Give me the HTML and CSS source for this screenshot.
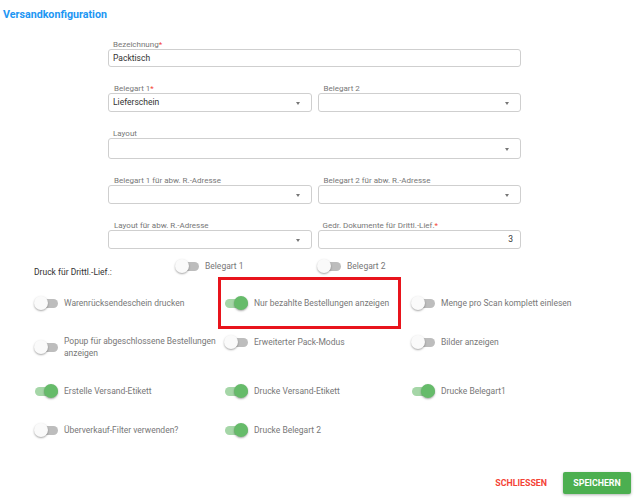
FILE: index.html
```html
<!DOCTYPE html>
<html lang="de">
<head>
    <meta charset="UTF-8">
    <meta name="viewport" content="width=device-width, initial-scale=1.0">
    <title>Versandkonfiguration</title>
    <link rel="stylesheet" href="styles.css">
</head>
<body>
    <h1 class="title">Versandkonfiguration</h1>

    <div class="form">
        <div class="field wide">
            <label class="notch">Bezeichnung<span class="req">*</span></label>
            <div class="box short">Packtisch</div>
        </div>

        <div class="field">
            <label>Belegart 1<span class="req">*</span></label>
            <div class="box">Lieferschein<span class="arrow"></span></div>
        </div>
        <div class="field">
            <label>Belegart 2</label>
            <div class="box"><span class="arrow"></span></div>
        </div>

        <div class="field wide">
            <label class="notch">Layout</label>
            <div class="box tall"><span class="arrow"></span></div>
        </div>

        <div class="field">
            <label>Belegart 1 für abw. R.-Adresse</label>
            <div class="box"><span class="arrow"></span></div>
        </div>
        <div class="field">
            <label>Belegart 2 für abw. R.-Adresse</label>
            <div class="box"><span class="arrow"></span></div>
        </div>

        <div class="field">
            <label>Layout für abw. R.-Adresse</label>
            <div class="box"><span class="arrow"></span></div>
        </div>
        <div class="field">
            <label class="notch">Gedr. Dokumente für Drittl.-Lief.<span class="req">*</span></label>
            <div class="box number">3</div>
        </div>
    </div>

    <div class="options">
        <div class="druck">
            <div class="druck-label">Druck für Drittl.-Lief.:</div>
            <div class="opt druck-item"><span class="toggle"></span><span>Belegart 1</span></div>
            <div class="opt"><span class="toggle"></span><span>Belegart 2</span></div>
        </div>

        <div class="grid">
            <div class="opt"><span class="toggle"></span><span>Warenrücksendeschein drucken</span></div>
            <div class="opt marked"><span class="toggle on"></span><span>Nur bezahlte Bestellungen anzeigen</span></div>
            <div class="opt"><span class="toggle"></span><span>Menge pro Scan komplett einlesen</span></div>

            <div class="opt"><span class="toggle"></span><span>Popup für abgeschlossene Bestellungen anzeigen</span></div>
            <div class="opt"><span class="toggle"></span><span>Erweiterter Pack-Modus</span></div>
            <div class="opt"><span class="toggle"></span><span>Bilder anzeigen</span></div>

            <div class="opt"><span class="toggle on"></span><span>Erstelle Versand-Etikett</span></div>
            <div class="opt"><span class="toggle on"></span><span>Drucke Versand-Etikett</span></div>
            <div class="opt"><span class="toggle on"></span><span>Drucke Belegart1</span></div>

            <div class="opt"><span class="toggle"></span><span>Überverkauf-Filter verwenden?</span></div>
            <div class="opt"><span class="toggle on"></span><span>Drucke Belegart 2</span></div>
        </div>
    </div>

    <div class="footer">
        <button class="btn close">SCHLIESSEN</button>
        <button class="btn save">SPEICHERN</button>
    </div>
</body>
</html>
```

FILE: styles.css
```css
* {
    padding: 0;
    margin: 0;
    box-sizing: border-box;
}

body {
    font-family: Roboto, "Liberation Sans", sans-serif;
    color: #333;
    background: #fff;
    width: 635px;
    height: 500px;
    overflow: hidden;
}

.title {
    font-size: 10.7px;
    font-weight: 700;
    color: #2196f3;
    line-height: 14px;
    padding: 8px 0 0 3px;
}

/* form fields */
.form {
    width: 413px;
    margin: 18px 0 0 108px;
    display: grid;
    grid-template-columns: 1fr 1fr;
    column-gap: 6px;
    row-gap: 17px;
}

.field.wide {
    grid-column: span 2;
}

.field label {
    display: block;
    font-size: 8px;
    line-height: 9px;
    height: 9px;
    color: #777;
    padding-left: 6px;
    white-space: nowrap;
}

.field label.notch {
    display: table;
    position: relative;
    background: #fff;
    margin-left: 4px;
    padding: 0 2px 0 1px;
    height: 11px;
    margin-bottom: -2px;
}

.req {
    color: #f44336;
}

.box {
    position: relative;
    height: 19px;
    border: 1px solid #cfcfcf;
    border-radius: 3px;
    font-size: 8.5px;
    line-height: 17px;
    color: #333;
    padding: 0 4px;
}

.box.short {
    height: 18px;
    line-height: 16px;
}

.box.tall {
    height: 21px;
    line-height: 19px;
}

.box.number {
    text-align: right;
    padding-right: 7px;
}

.arrow {
    position: absolute;
    right: 11px;
    top: 50%;
    margin-top: -1px;
    border-left: 2.5px solid transparent;
    border-right: 2.5px solid transparent;
    border-top: 3px solid #777;
}

/* toggles */
.options {
    padding-left: 34px;
    margin-top: 10px;
    font-size: 8.5px;
    color: #777;
}

.druck {
    display: flex;
    align-items: flex-start;
}

.druck-label {
    width: 141px;
    color: #333;
    line-height: 12px;
    padding-top: 7px;
}

.druck-item {
    width: 142px;
}

.grid {
    display: grid;
    grid-template-columns: 190px 187px 1fr;
    align-items: start;
    margin-top: 18px;
}

.opt {
    display: flex;
    align-items: center;
    gap: 6px;
    line-height: 12px;
    padding-bottom: 25px;
}

.druck .opt {
    padding-bottom: 0;
}

.grid .opt span:last-child {
    max-width: 154px;
}

.toggle {
    position: relative;
    flex: none;
    width: 24px;
    height: 14px;
}

.toggle::before {
    content: "";
    position: absolute;
    left: 1px;
    right: 0;
    top: 2.5px;
    height: 9px;
    border-radius: 5px;
    background: #bdbdbd;
}

.toggle::after {
    content: "";
    position: absolute;
    left: 0;
    top: 0;
    width: 14px;
    height: 14px;
    border-radius: 50%;
    background: #fafafa;
    box-shadow: 0 1px 2px rgba(0, 0, 0, 0.35);
}

.toggle.on::before {
    background: #a5d6a7;
}

.toggle.on::after {
    left: auto;
    right: 0;
    background: #66bb6a;
}

/* red annotation frame */
.marked {
    position: relative;
}

.marked::after {
    content: "";
    position: absolute;
    left: -6px;
    right: 10px;
    top: -19px;
    bottom: 6px;
    border: 3px solid #e8141c;
}

/* footer buttons */
.footer {
    display: flex;
    justify-content: flex-end;
    align-items: center;
    gap: 10px;
    margin-top: 10px;
    padding-right: 4px;
}

.btn {
    font-family: Roboto, "Liberation Sans", sans-serif;
    font-size: 8.8px;
    font-weight: 700;
    border: none;
    background: none;
    height: 22px;
    padding: 0 6px;
    cursor: pointer;
}

.btn.close {
    color: #f44336;
}

.btn.save {
    width: 68px;
    background: #4caf50;
    color: #fff;
    border-radius: 2px;
    box-shadow: 0 1px 3px rgba(0, 0, 0, 0.3);
}
```
